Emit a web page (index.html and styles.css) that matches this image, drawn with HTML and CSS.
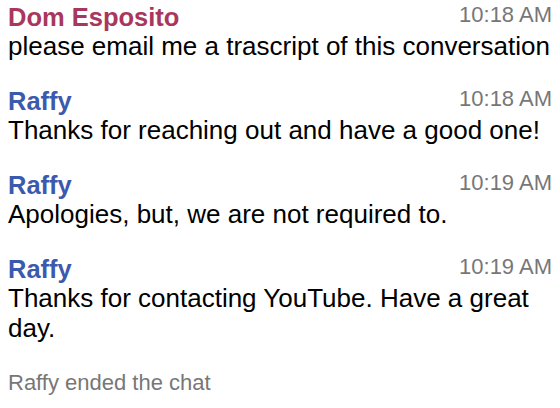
FILE: index.html
```html
<!DOCTYPE html>
<html>
<head>
<meta charset="utf-8">
<link rel="stylesheet" href="styles.css">
</head>
<body>
<div class="chat">
  <div class="msg">
    <div class="head"><span class="name visitor">Dom Esposito</span><span class="time">10:18 AM</span></div>
    <div class="text">please email me a trascript of this conversation</div>
  </div>
  <div class="msg">
    <div class="head"><span class="name agent">Raffy</span><span class="time">10:18 AM</span></div>
    <div class="text">Thanks for reaching out and have a good one!</div>
  </div>
  <div class="msg">
    <div class="head"><span class="name agent">Raffy</span><span class="time">10:19 AM</span></div>
    <div class="text">Apologies, but, we are not required to.</div>
  </div>
  <div class="msg">
    <div class="head"><span class="name agent">Raffy</span><span class="time">10:19 AM</span></div>
    <div class="text">Thanks for contacting YouTube. Have a great day.</div>
  </div>
  <div class="event">Raffy ended the chat</div>
</div>
</body>
</html>
```
FILE: styles.css
```css
html, body {
  margin: 0;
  background: #ffffff;
}
body {
  font-family: "Liberation Sans", Arial, Helvetica, sans-serif;
  color: #000;
}
.chat {
  padding: 5px 8px 0 8px;
  display: flex;
  flex-direction: column;
  gap: 28px;
}
.head {
  display: flex;
  justify-content: space-between;
  align-items: flex-start;
}
.name {
  font-size: 25.5px;
  font-weight: bold;
  line-height: 25px;
}
.visitor { color: #a9375d; }
.agent { color: #3b59ad; }
.time {
  font-size: 22px;
  line-height: 20px;
  color: #777;
}
.text {
  font-size: 26px;
  line-height: 30px;
  margin-top: 1px;
}
.event {
  margin-top: 0;
  font-size: 22px;
  line-height: 24px;
  color: #777;
}
```
